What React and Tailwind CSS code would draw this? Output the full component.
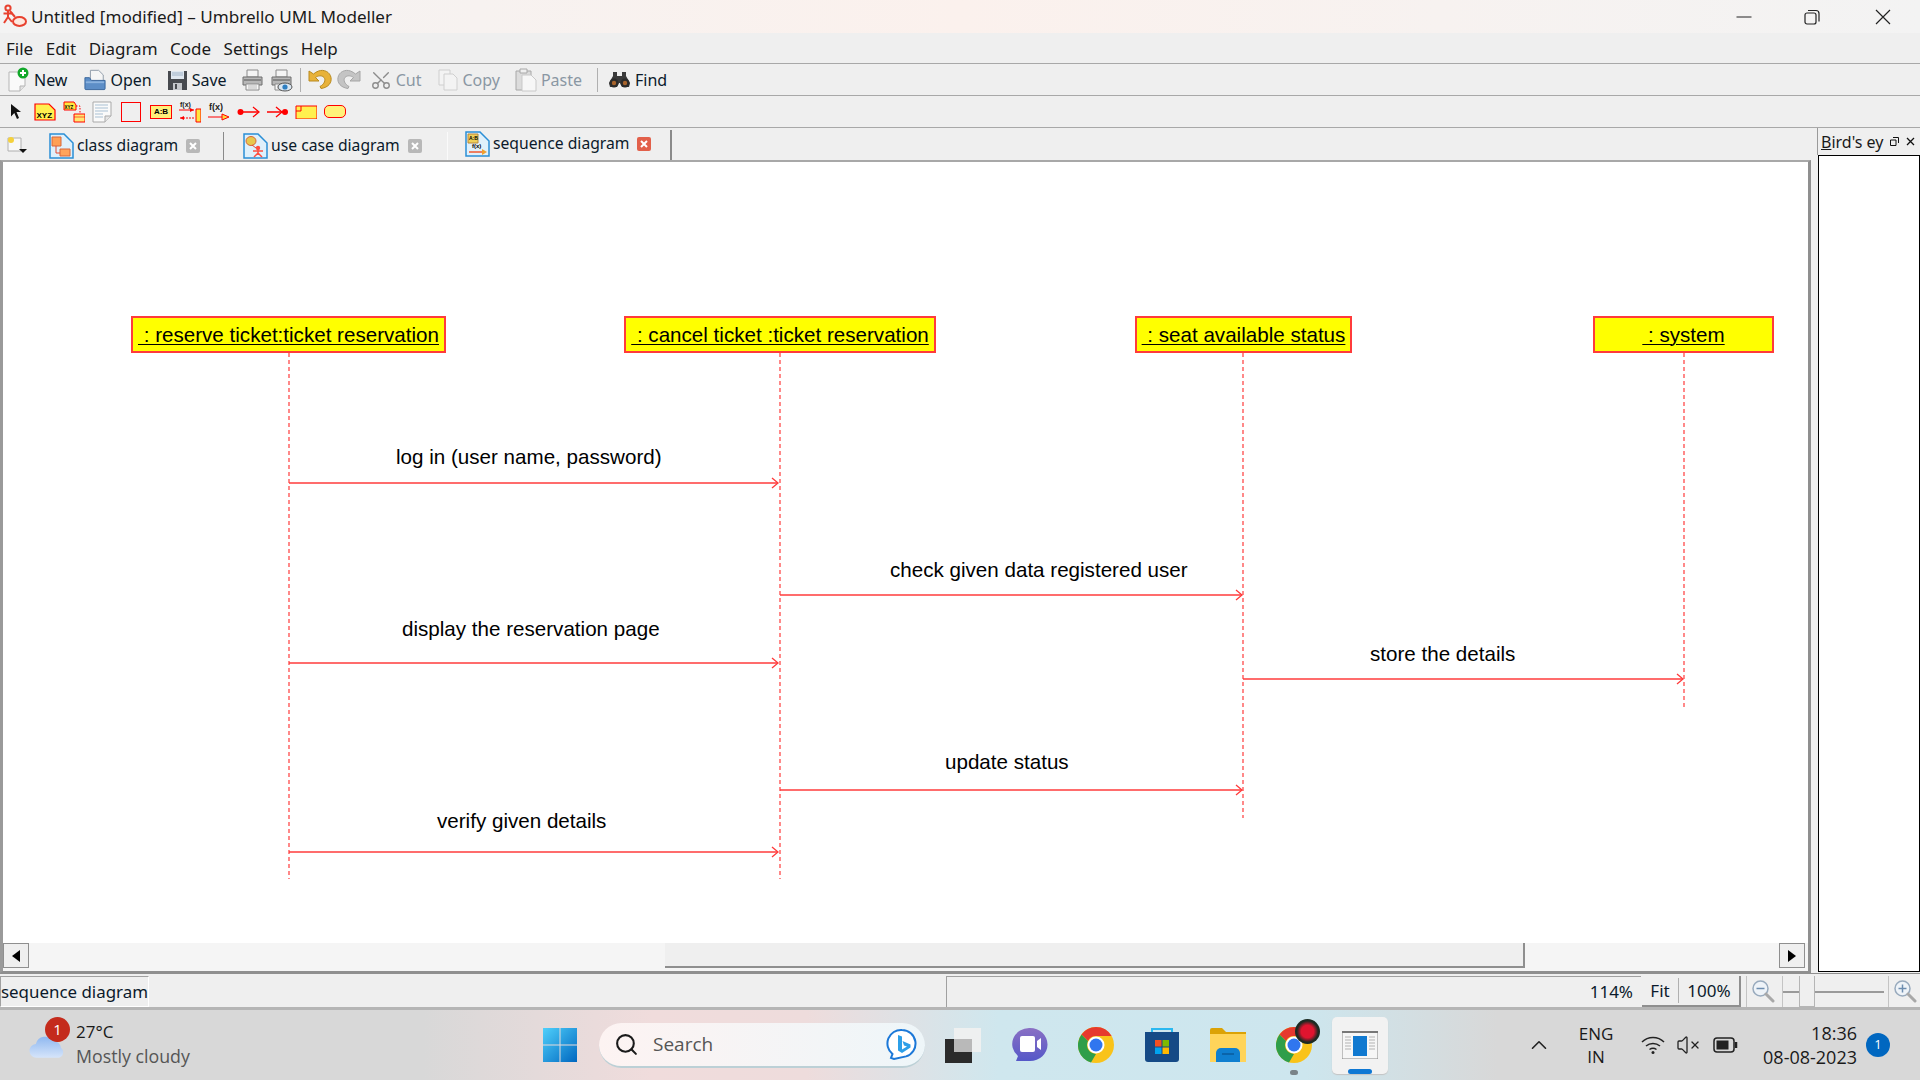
import React from "react";
import { Search, Scissors, ChevronUp, VolumeX } from "lucide-react";

const UI = "font-['Noto_Sans','Open_Sans',sans-serif]";

function AppLogo() {
  return (
    <svg width="26" height="26" viewBox="0 0 26 26" fill="none" stroke="#e8412f" strokeWidth="2">
      <circle cx="6" cy="4" r="2.600" />
      <path d="M6 7v6M1.500 9.500h9M6 13l-4 6M6 13l4 5" />
      <ellipse cx="17.500" cy="17.500" rx="6.500" ry="4.500" fill="#fde8df" />
      <path d="M8 7l5 6" />
    </svg>
  );
}

function NewIcon() {
  return (
    <svg width="24" height="26" viewBox="0 0 24 26">
      <path d="M3 5h11l5 5v9l-5 5H3z" fill="#fafafa" stroke="#b5b5b5" />
      <path d="M14 24v-5h5" fill="#e3e3e3" stroke="#b5b5b5" />
      <circle cx="17" cy="6" r="5.500" fill="#12a82a" />
      <path d="M17 3v6M14 6h6" stroke="#fff" strokeWidth="2" />
    </svg>
  );
}

function OpenIcon() {
  return (
    <svg width="22" height="25" viewBox="0 0 24 26">
      <path d="M7 3h9l5 5v7H7z" fill="#f5f5f5" stroke="#8b97a5" />
      <path d="M1 11h5l2 3h15v9a1 1 0 0 1-1 1H2a1 1 0 0 1-1-1z" fill="#5d8ec7" stroke="#34639a" />
      <path d="M2 15h20v2H2z" fill="#8cb3df" />
    </svg>
  );
}

function SaveIcon() {
  return (
    <svg width="21" height="22" viewBox="0 0 21 22">
      <path d="M1 2h19v19H1z" fill="#474a4f" />
      <path d="M4 2h13v8H4z" fill="#dfe7ef" />
      <path d="M5 4h11M5 6h11" stroke="#9fb2c6" />
      <path d="M6 14h9v7H6z" fill="#c4c7cb" />
      <path d="M8 15h2v5H8z" fill="#474a4f" />
    </svg>
  );
}

function PrintIcon({ eye }) {
  return (
    <svg width="23" height="24" viewBox="0 0 23 24">
      <path d="M6 2h11v7H6z" fill="#f4f4f4" stroke="#8a8a8a" />
      <path d="M2 9h19v8H2z" fill="#b7b7b7" stroke="#6e6e6e" />
      <path d="M3 12h17" stroke="#555" />
      <path d="M5 16h13v6H5z" fill="#f6f6f6" stroke="#8a8a8a" />
      <path d="M7 18h9M7 20h9" stroke="#bbb" />
      {eye && <ellipse cx="15" cy="19" rx="7" ry="4" fill="#dbe7f2" stroke="#555" />}
      {eye && <circle cx="15" cy="19" r="2.600" fill="#2f7fc1" />}
    </svg>
  );
}

function ArrowTurn({ flip, color, edge }) {
  return (
    <svg width="24" height="22" viewBox="0 0 24 22" className={flip ? "-scale-x-100" : ""}>
      <path
        d="M1 2v10h10l-3.500-3.500C10 6.500 14 6 16 8.500c2 2.500.5 6.500-4 9l1 2c7.500-1 11-6 10-11C22 3 16 0 10.500 2 8.500 2.800 6.800 3.800 5.500 5z"
        fill={color}
        stroke={edge}
      />
    </svg>
  );
}

function CopyIcon() {
  return (
    <svg width="20" height="22" viewBox="0 0 20 22" fill="#f3f3f3" stroke="#cfcfcf">
      <path d="M1 1h11v15H1z" />
      <path d="M6 5h9l4 4v12H6z" />
    </svg>
  );
}

function PasteIcon() {
  return (
    <svg width="22" height="24" viewBox="0 0 22 24">
      <path d="M1 3h15v19H1z" fill="#dcdcdc" stroke="#a8a8a8" />
      <path d="M5 1h7v4H5z" fill="#efefef" stroke="#a8a8a8" />
      <path d="M7 7h9l5 5v11H7z" fill="#f7f7f7" stroke="#c9c9c9" />
    </svg>
  );
}

function Binoculars() {
  return (
    <svg width="23" height="18" viewBox="0 0 23 18">
      <path d="M5 1h4v4h5V1h4v4l4 7-1 4h-7l-2-4h-1l-2 4H2l-1-4 4-7z" fill="#3a3a3a" />
      <circle cx="6" cy="12" r="4.500" fill="#2b2b2b" />
      <circle cx="17" cy="12" r="4.500" fill="#2b2b2b" />
      <circle cx="6" cy="12" r="2.200" fill="#a8642c" />
      <circle cx="17" cy="12" r="2.200" fill="#a8642c" />
    </svg>
  );
}

function ToolButton({ icon, label, disabled, className }) {
  return (
    <div className={"flex items-center " + className}>
      {icon}
      {label && (
        <span className={"ml-[4px] text-[16px] " + (disabled ? "text-[#8a97a3]" : "text-[#0b1a2b]")}>{label}</span>
      )}
    </div>
  );
}

function SelectArrow() {
  return (
    <svg width="14" height="18" viewBox="0 0 14 18" className="mr-[4px]">
      <path d="M2 1l10 8H7.500l2.500 6-2 1-2.700-6L2 13.500z" fill="#111" />
    </svg>
  );
}

function XyzIcon() {
  return (
    <svg width="22" height="18" viewBox="0 0 22 18">
      <path d="M1 1h14l6 6v10H1z" fill="#fff04f" stroke="#f00" strokeWidth="1.200" />
      <text x="2.500" y="15" fontSize="8" fontWeight="700" fontFamily="Liberation Sans">XYZ</text>
    </svg>
  );
}

function XyzDepIcon() {
  return (
    <svg width="22" height="22" viewBox="0 0 22 22">
      <path d="M1 1h10l2 3v5H1z" fill="#ffe53f" stroke="#f00" />
      <text x="1.500" y="8" fontSize="4.500" fontWeight="700" fontFamily="Liberation Sans">XYZ</text>
      <path d="M13 5h4v8" stroke="#f00" strokeDasharray="1.500 1.500" fill="none" />
      <path d="M11 13h11v8H11z" fill="#ffe873" stroke="#f00" />
      <path d="M11 16h11" stroke="#f00" strokeWidth=".6" />
    </svg>
  );
}

function NoteIcon() {
  return (
    <svg width="20" height="22" viewBox="0 0 20 22">
      <path d="M1 1h18v14l-6 6H1z" fill="#fafafa" stroke="#a9a9a9" />
      <path d="M13 21v-6h6" fill="#e5e5e5" stroke="#a9a9a9" />
      <path d="M3 4h13M3 7h13M3 10h13M3 13h8M3 16h8" stroke="#a9c0d3" />
    </svg>
  );
}

function FxMsgIcon() {
  return (
    <svg width="22" height="22" viewBox="0 0 22 22">
      <text x="1" y="6" fontSize="7" fontWeight="700" fontFamily="Liberation Sans" fill="#222">f(x)</text>
      <path d="M0 9h15" stroke="#f00" />
      <path d="M11 7l4 2-4 2z" fill="#f00" />
      <path d="M17 8h5v13h-5z" fill="#ffe53f" stroke="#f00" />
      <path d="M1 17h14" stroke="#f00" strokeDasharray="2 1" />
      <path d="M5 15l-4 2 4 2z" fill="#f00" />
    </svg>
  );
}

function FxIcon() {
  return (
    <svg width="22" height="20" viewBox="0 0 22 20">
      <text x="1" y="8" fontSize="9" fontWeight="700" fontFamily="Liberation Sans" fill="#222">f(x)</text>
      <path d="M0 15h16" stroke="#f00" />
      <path d="M14 12l7 3-7 3z" fill="#ffd83f" stroke="#f00" />
    </svg>
  );
}

function FoundIcon({ reverse }) {
  return (
    <svg width="23" height="12" viewBox="0 0 23 12">
      {reverse ? (
        <>
          <path d="M0 6h17" stroke="#f00" strokeWidth="1.500" />
          <path d="M9 1l6 5-6 5" stroke="#f00" strokeWidth="1.300" fill="none" />
          <circle cx="18" cy="6" r="3" fill="#f00" />
        </>
      ) : (
        <>
          <circle cx="3.500" cy="6" r="3" fill="#f00" />
          <path d="M5 6h16" stroke="#f00" strokeWidth="1.500" />
          <path d="M16 1l6 5-6 5" stroke="#f00" strokeWidth="1.300" fill="none" />
        </>
      )}
    </svg>
  );
}

function TabIcon({ kind }) {
  return (
    <svg width="25" height="26" viewBox="0 0 25 26">
      <path d="M1 1h14l5 5 4 4v15H1z" fill="#dff0fb" stroke="#2b8fd6" strokeWidth="1.500" />
      {kind === "class" && (
        <>
          <path d="M3 4h9v9H3z" fill="#ff9f54" stroke="#d8663a" />
          <path d="M11 16h10v7H11z" fill="#ffa45c" stroke="#d8663a" />
          <path d="M7 13v7h4" stroke="#e6492f" fill="none" />
        </>
      )}
      {kind === "case" && (
        <>
          <ellipse cx="8" cy="8" rx="5" ry="4.500" fill="#e8c84d" stroke="#d8663a" />
          <circle cx="15" cy="15" r="2.200" fill="#ff4e3f" />
          <path d="M15 17v3M10 18h10M15 20l-4 4M15 20l4 4" stroke="#ff4e3f" strokeWidth="1.500" />
          <path d="M9 12l4 3" stroke="#e6492f" />
        </>
      )}
      {kind === "seq" && (
        <>
          <path d="M3 3h10v9H3z" fill="#f0d15a" stroke="#b8863a" />
          <text x="4" y="9" fontSize="5" fontWeight="700" fontFamily="Liberation Sans">A:B</text>
          <text x="7" y="17" fontSize="6" fontWeight="700" fontFamily="Liberation Sans">f(x)</text>
          <path d="M4 21h15" stroke="#f0592f" strokeWidth="1.500" />
          <path d="M17 18l5 3-5 3z" fill="#f0a12f" />
        </>
      )}
    </svg>
  );
}

function TabClose({ active }) {
  return (
    <span className={"ml-[8px] flex h-[14px] w-[14px] items-center justify-center rounded-[2px] " + (active ? "bg-[#e2604a]" : "bg-[#b8b8b8]")}>
      <svg width="8" height="8" viewBox="0 0 8 8" stroke="#fff" strokeWidth="2">
        <path d="M1 1l6 6M7 1L1 7" />
      </svg>
    </span>
  );
}

function ZoomGlass({ plus }) {
  return (
    <svg width="24" height="25" viewBox="0 0 24 25" fill="none">
      <circle cx="9.500" cy="9.500" r="7.500" fill="#eef3f8" stroke="#98aabd" strokeWidth="1.500" />
      <path d="M5.500 9.500h8" stroke="#6d8db0" strokeWidth="1.500" />
      {plus && <path d="M9.500 5.500v8" stroke="#6d8db0" strokeWidth="1.500" />}
      <path d="M15 15l7 7" stroke="#a8a8a8" strokeWidth="3" strokeLinecap="round" />
    </svg>
  );
}

function WeatherIcon() {
  return (
    <div className="relative h-[44px] w-[44px]">
      <svg width="37" height="32" viewBox="0 0 38 32" className="absolute bottom-[7px] left-0">
        <defs>
          <linearGradient id="cl" x1="0" y1="0" x2="0" y2="1">
            <stop offset="0" stopColor="#8fb8f0" />
            <stop offset="1" stopColor="#d5e4fa" />
          </linearGradient>
        </defs>
        <circle cx="29" cy="7" r="7" fill="#f08a1d" />
        <path d="M8 30a7 7 0 0 1-1-14 10 10 0 0 1 18-3 8 8 0 0 1 8 7c4 3 2 10-3 10z" fill="url(#cl)" />
      </svg>
      <span className="absolute left-[16px] top-[-6px] flex h-[25px] w-[25px] items-center justify-center rounded-full bg-[#c42b1c] text-[15px] text-white">1</span>
    </div>
  );
}

function WinLogo() {
  return (
    <svg width="36" height="36" viewBox="0 0 36 36">
      <defs>
        <linearGradient id="wl" x1="0" y1="0" x2="1" y2="1">
          <stop offset="0" stopColor="#4fd0fb" />
          <stop offset="1" stopColor="#0067c0" />
        </linearGradient>
      </defs>
      <path d="M1 1h16.500v16.500H1zM18.500 1H35v16.500H18.500zM1 18.500h16.500V35H1zM18.500 18.500H35V35H18.500z" fill="url(#wl)" />
    </svg>
  );
}

function BingIcon() {
  return (
    <svg width="32" height="32" viewBox="0 0 32 32" fill="none">
      <path d="M16 2a13.500 13.500 0 0 1 4 26.400L8 31l-3-1 1.500-4A13.500 13.500 0 0 1 16 2z" fill="#fff" stroke="#1b78d8" strokeWidth="2" />
      <path d="M12 7l4 1.500v13l5-3-3-1-1.500-4.500 8 3.500v3L16 25l-4-2.500z" fill="#2c9fe8" />
    </svg>
  );
}

function TerminalIcon() {
  return (
    <svg width="36" height="36" viewBox="0 0 36 36">
      <path d="M0 12h27v24H0z" fill="#2b2b2b" />
      <path d="M9 1h27v24H9z" fill="#f1f1f1" opacity=".9" />
      <path d="M9 12h18v13H9z" fill="#b9b9b9" />
    </svg>
  );
}

function TeamsIcon() {
  return (
    <svg width="36" height="36" viewBox="0 0 36 36">
      <defs>
        <linearGradient id="tm" x1="0" y1="0" x2="0" y2="1">
          <stop offset="0" stopColor="#8a70c4" />
          <stop offset="1" stopColor="#5558c8" />
        </linearGradient>
      </defs>
      <path d="M18 1a17 16 0 0 1 0 33H4l2-5A17 16 0 0 1 18 1z" fill="url(#tm)" />
      <path d="M8 11a2 2 0 0 1 2-2h11a2 2 0 0 1 2 2v12a2 2 0 0 1-2 2H10a2 2 0 0 1-2-2z" fill="#fff" />
      <path d="M25 14l4-3v12l-4-3z" fill="#fff" />
    </svg>
  );
}

function ChromeIcon() {
  return (
    <svg width="36" height="36" viewBox="0 0 36 36">
      <circle cx="18" cy="18" r="18" fill="#f9c31a" />
      <path d="M18 0a18 18 0 0 1 15.600 9H18a9 9 0 0 0-8 5L3.500 7.500A18 18 0 0 1 18 0z" fill="#e6392e" />
      <path d="M3.500 7.500L10 14a9 9 0 0 0 8 13l-5 8.500A18 18 0 0 1 3.500 7.500z" fill="#2f9e4a" />
      <circle cx="18" cy="18" r="8.500" fill="#fff" />
      <circle cx="18" cy="18" r="6.500" fill="#3076ef" />
    </svg>
  );
}

function StoreIcon() {
  return (
    <svg width="36" height="36" viewBox="0 0 36 36">
      <path d="M8 6V2h20v4" fill="none" stroke="#2ab8f0" strokeWidth="2" />
      <path d="M1 5h34v27a3 3 0 0 1-3 3H4a3 3 0 0 1-3-3z" fill="#154a86" />
      <path d="M11 13h6.500v6.500H11z" fill="#f25022" />
      <path d="M18.500 13H25v6.500h-6.500z" fill="#7fba00" />
      <path d="M11 20.500h6.500V27H11z" fill="#00a4ef" />
      <path d="M18.500 20.500H25V27h-6.500z" fill="#ffb900" />
    </svg>
  );
}

function FolderIcon() {
  return (
    <svg width="36" height="34" viewBox="0 0 36 34">
      <path d="M0 2a2 2 0 0 1 2-2h10l4 4h20v30H0z" fill="#dba206" />
      <path d="M0 6h36v28H0z" fill="#ffd45a" />
      <path d="M6 34v-9a5 5 0 0 1 5-5h14a5 5 0 0 1 5 5v9z" fill="#0f7fd0" />
      <path d="M12 26h12" stroke="#0a5b9e" strokeWidth="1.500" />
    </svg>
  );
}

function UmbrelloTaskIcon() {
  return (
    <svg width="36" height="28" viewBox="0 0 36 28">
      <path d="M0 0h36v28H0z" fill="#f6f6f6" stroke="#888" />
      <path d="M0 0h36v2H0z" fill="#777" />
      <path d="M11 5h14v20H11z" fill="#1079d0" />
      <path d="M3 6h6M3 9h6M3 12h6M3 15h6M3 18h6M27 6h6M27 9h6M27 12h6M27 15h6M27 18h6" stroke="#c9c9c9" strokeWidth="1.500" />
    </svg>
  );
}

function Node({ label, className }) {
  return (
    <div className={"absolute top-[154px] flex h-[37px] items-center justify-center whitespace-pre border-2 border-[#ff3b3b] bg-[#ffff00] pt-[1px] text-[20.6px] text-black underline decoration-1 underline-offset-2 " + className}>
      {label}
    </div>
  );
}

function Msg({ children, className }) {
  return <span className={"absolute whitespace-pre text-[20.6px] leading-[24px] text-black " + className}>{children}</span>;
}

function Arrow({ x1, x2, y }) {
  return (
    <g stroke="#ff3b3b" strokeWidth="1.300" fill="none">
      <path d={`M${x1} ${y}H${x2}`} />
      <path d={`M${x2 - 6} ${y - 5}l6 5-6 5`} />
    </g>
  );
}

function Lifeline({ x, y2 }) {
  return <path d={`M${x} 353V${y2}`} stroke="#ff3b3b" strokeWidth="1.200" strokeDasharray="4 3" fill="none" />;
}

export default function App() {
  return (
    <div className={"flex h-[1080px] w-[1920px] flex-col overflow-hidden bg-[#efefef] " + UI}>
      {/* title bar */}
      <div className="flex h-[33px] items-center bg-gradient-to-r from-[#f3f3f3] via-[#fbf1ed] to-[#f3f3f3] pl-[2px]">
        <AppLogo />
        <span className="ml-[3px] text-[17.100px] text-[#1a1a1a]">Untitled [modified] – Umbrello UML Modeller</span>
        <div className="ml-auto flex items-center">
          <svg width="16" height="16" viewBox="0 0 16 16" stroke="#222" className="mr-[52px]">
            <path d="M0.500 8h15" />
          </svg>
          <svg width="16" height="16" viewBox="0 0 16 16" stroke="#222" fill="none" strokeWidth="1.200" className="mr-[55px]">
            <rect x="1" y="4" width="11" height="11" rx="2" />
            <path d="M4 1.500h8a3 3 0 0 1 3 3v8" />
          </svg>
          <svg width="16" height="16" viewBox="0 0 16 16" stroke="#222" strokeWidth="1.200" className="mr-[29px]">
            <path d="M1 1l14 14M15 1L1 15" />
          </svg>
        </div>
      </div>

      {/* menu */}
      <div className="flex h-[31px] items-center gap-[12.500px] border-b border-[#a8a8a8] pl-[6px] pt-[2px] text-[17px] text-[#1a1a1a]">
        <span>File</span>
        <span>Edit</span>
        <span>Diagram</span>
        <span>Code</span>
        <span>Settings</span>
        <span>Help</span>
      </div>

      {/* main toolbar */}
      <div className="flex h-[32px] items-center border-b border-[#a8a8a8] pl-[6px]">
        <ToolButton icon={<NewIcon />} label="New" />
        <ToolButton icon={<OpenIcon />} label="Open" className="ml-[17px]" />
        <ToolButton icon={<SaveIcon />} label="Save" className="ml-[15px]" />
        <ToolButton icon={<PrintIcon />} className="ml-[14px]" />
        <ToolButton icon={<PrintIcon eye />} className="ml-[6px]" />
        <div className="ml-[7px] h-[24px] w-px bg-[#b0b0b0]" />
        <ToolButton icon={<ArrowTurn color="#e8b23a" edge="#b98a1e" />} className="ml-[7px]" />
        <ToolButton icon={<ArrowTurn flip color="#c4c4c4" edge="#a6a6a6" />} className="ml-[5px]" />
        <ToolButton icon={<Scissors size={22} color="#8c8c8c" strokeWidth={1.500} className="-rotate-90" />} label="Cut" disabled className="ml-[9px]" />
        <ToolButton icon={<CopyIcon />} label="Copy" disabled className="ml-[17px]" />
        <ToolButton icon={<PasteIcon />} label="Paste" disabled className="ml-[15px]" />
        <div className="ml-[15px] h-[24px] w-px bg-[#b0b0b0]" />
        <ToolButton icon={<Binoculars />} label="Find" className="ml-[10px]" />
      </div>

      {/* widget toolbar */}
      <div className="flex h-[32px] items-center gap-[7px] border-b border-[#a8a8a8] pl-[9px]">
        <SelectArrow />
        <XyzIcon />
        <XyzDepIcon />
        <NoteIcon />
        <div className="ml-[2px] h-[20px] w-[20px] border border-[#ff0000]" />
        <div className="ml-[2px] flex h-[14px] w-[22px] items-center justify-center border border-[#ff0000] bg-[#ffef7a] text-[8px] font-bold leading-none font-['Liberation_Sans',sans-serif]">A:B</div>
        <FxMsgIcon />
        <FxIcon />
        <FoundIcon />
        <FoundIcon reverse />
        <svg width="22" height="14" viewBox="0 0 22 14" className="ml-[-2px]">
          <path d="M1 1h21v13H1z" fill="#fff04f" stroke="#f00" />
          <path d="M1 6h5V1" fill="none" stroke="#f00" />
        </svg>
        <div className="h-[13px] w-[22px] rounded-[5px] border border-[#ff0000] bg-[#fff27a]" />
      </div>

      {/* workspace + dock */}
      <div className="flex h-[845px]">
        <div className="flex w-[1811px] flex-col">
          <div className="flex h-[32px] items-end text-[15.700px] text-[#0b1a2b]">
            <div className="flex h-[30px] w-[34px] items-center pl-[6px]">
              <svg width="22" height="20" viewBox="0 0 22 20">
                <path d="M2 3h13v13H2z" fill="#f8f8f8" stroke="#b0b0b0" />
                <circle cx="5" cy="5" r="3" fill="#f5d13c" />
                <path d="M13 14h8l-4 4z" fill="#111" />
              </svg>
            </div>
            <div className="flex h-[28px] w-[190px] items-center border-r border-[#8a8a8a] pb-[1px] pl-[15px]">
              <TabIcon kind="class" />
              <span className="ml-[3px]">class diagram</span>
              <TabClose />
            </div>
            <div className="flex h-[28px] w-[224px] items-center border-r border-[#fafafa] pb-[1px] pl-[19px]">
              <TabIcon kind="case" />
              <span className="ml-[3px]">use case diagram</span>
              <TabClose />
            </div>
            <div className="flex h-[30px] w-[224px] items-center border-r-2 border-[#8a8a8a] pb-[2px] pl-[17px]">
              <TabIcon kind="seq" />
              <span className="ml-[3px]">sequence diagram</span>
              <TabClose active />
            </div>
          </div>

          <div className="flex flex-1 flex-col border-x-[3px] border-b-2 border-t-2 border-[#8f8f8f] border-l-[#9a9a9a] border-t-[#a8a8a8] bg-white">
            {/* diagram canvas */}
            <div className="relative flex-1 overflow-hidden font-['Liberation_Sans',sans-serif]">
              <svg className="absolute left-0 top-0" width="1805" height="781" viewBox="3 162 1805 781">
                <Lifeline x={289} y2={879} />
                <Lifeline x={780} y2={879} />
                <Lifeline x={1243} y2={818} />
                <Lifeline x={1684} y2={707} />
                <Arrow x1={289} x2={778} y={483} />
                <Arrow x1={780} x2={1242} y={595} />
                <Arrow x1={289} x2={778} y={663} />
                <Arrow x1={1243} x2={1683} y={679} />
                <Arrow x1={780} x2={1242} y={790} />
                <Arrow x1={289} x2={778} y={852} />
              </svg>
              <Node label=" : reserve ticket:ticket reservation" className="left-[128px] w-[315px]" />
              <Node label=" : cancel ticket :ticket reservation" className="left-[621px] w-[312px]" />
              <Node label=" : seat available status" className="left-[1132px] w-[217px]" />
              <Node label=" : system" className="left-[1590px] w-[181px]" />
              <Msg className="left-[393px] top-[283px]">log in (user name, password)</Msg>
              <Msg className="left-[887px] top-[396px]">check given data registered user</Msg>
              <Msg className="left-[399px] top-[455px]">display the reservation page</Msg>
              <Msg className="left-[1367px] top-[480px]">store the details</Msg>
              <Msg className="left-[942px] top-[588px]">update status</Msg>
              <Msg className="left-[434px] top-[647px]">verify given details</Msg>
            </div>
            {/* horizontal scrollbar */}
            <div className="flex h-[28px] items-start bg-[#f5f5f5] pr-[3px]">
              <div className="flex h-[25px] w-[26px] items-center justify-center border border-[#8f8f8f] bg-[#efefef]">
                <svg width="8" height="12" viewBox="0 0 8 12"><path d="M8 0v12L0 6z" fill="#000" /></svg>
              </div>
              <div className="ml-[636px] h-[25px] w-[860px] border-b-2 border-r-2 border-[#8f8f8f] bg-[#efefef]" />
              <div className="ml-auto flex h-[25px] w-[26px] items-center justify-center border border-[#8f8f8f] bg-[#efefef]">
                <svg width="8" height="12" viewBox="0 0 8 12"><path d="M0 0v12l8-6z" fill="#000" /></svg>
              </div>
            </div>
          </div>
        </div>

        {/* bird's eye dock */}
        <div className="ml-[6px] flex flex-1 flex-col">
          <div className="flex h-[27px] items-center border-l border-[#9a9a9a] pl-[3px] text-[16px] text-[#1a1a1a]">
            <span className="w-[63px] whitespace-pre"><span className="underline">B</span>ird's ey</span>
            <svg width="9" height="9" viewBox="0 0 9 9" fill="none" stroke="#111" className="ml-[6px]">
              <path d="M0.500 3h5.500v5.500H0.500zM3 0.500h5.500V6" />
            </svg>
            <svg width="9" height="9" viewBox="0 0 9 9" stroke="#111" strokeWidth="1.300" className="ml-[7px]">
              <path d="M1 1l7 7M8 1L1 8" />
            </svg>
          </div>
          <div className="ml-[1px] h-[817px] border border-black bg-white" />
        </div>
      </div>

      {/* status bar */}
      <div className="flex h-[37px] items-stretch border-t border-[#8f8f8f] border-b-[3px] border-b-[#b5b5b5] pt-[2px] text-[17px] text-[#0b1a2b]">
        <div className="flex w-[149px] items-center whitespace-nowrap border border-t-[#a0a0a0] border-l-[#a0a0a0] border-r-white border-b-white pt-[1px] text-[16.900px]">sequence diagram</div>
        <div className="ml-[797px] flex w-[695px] items-center justify-end border-l border-t border-[#a0a0a0] pr-[8px]">
          <span>114%</span>
        </div>
        <div className="ml-[1px] flex w-[99px] items-center border-b-2 border-r-2 border-[#8f8f8f]">
          <span className="w-[37px] border-r border-[#b0b0b0] text-center">Fit</span>
          <span className="flex-1 text-center">100%</span>
        </div>
        <div className="ml-[5px] flex w-[33px] items-center justify-center border-l border-[#c4c4c4]">
          <ZoomGlass />
        </div>
        <div className="relative ml-[3px] flex w-[102px] items-center border-l border-[#c4c4c4]">
          <div className="h-[2px] w-full bg-[#9a9a9a]" />
          <div className="absolute left-[16px] top-0 h-full w-[16px] border-x border-b border-[#b5b5b5] bg-[#efefef]" />
        </div>
        <div className="ml-[4px] flex flex-1 items-center justify-center border-l border-[#c4c4c4]">
          <ZoomGlass plus />
        </div>
      </div>

      {/* windows taskbar */}
      <div className="flex h-[70px] items-center bg-[linear-gradient(90deg,#d8d8d8_0%,#d8d8d8_22%,#f0dcdc_34%,#eedcdc_42%,#cfe7ee_52%,#cde6ee_68%,#d8d8d8_78%,#d8d8d8_100%)] font-['Open_Sans',sans-serif]">
        <div className="ml-[29px] flex w-[47px] items-end">
          <WeatherIcon />
        </div>
        <div className="flex w-[119px] flex-col leading-[24px]">
          <span className="mt-[-2px] text-[17px] text-[#1a1a1a]">27°C</span>
          <span className="whitespace-nowrap text-[17.800px] text-[#555]">Mostly cloudy</span>
        </div>
        <div className="ml-[347px]">
          <WinLogo />
        </div>
        <div className="ml-[21px] flex h-[45px] w-[326px] items-center rounded-full border-b-2 border-[#bcd0d6] bg-gradient-to-r from-[#fdf3f2] to-[#eef6f9] pl-[15px] pr-[7px]">
          <Search size={25} color="#1a1a1a" strokeWidth={2} />
          <span className="ml-[14px] text-[19px] text-[#555]">Search</span>
          <div className="ml-auto">
            <BingIcon />
          </div>
        </div>
        <div className="ml-[20px]">
          <TerminalIcon />
        </div>
        <div className="ml-[31px]">
          <TeamsIcon />
        </div>
        <div className="ml-[30px]">
          <ChromeIcon />
        </div>
        <div className="ml-[30px]">
          <StoreIcon />
        </div>
        <div className="ml-[30px]">
          <FolderIcon />
        </div>
        <div className="relative ml-[30px]">
          <ChromeIcon />
          <span className="absolute left-[19px] top-[-8px] h-[25px] w-[25px] rounded-full bg-[radial-gradient(closest-side,#e0142f_50%,#1c2a22_85%)]" />
          <span className="absolute left-[14px] top-[43px] h-[5px] w-[8px] rounded-full bg-[#7a8388]" />
        </div>
        <div className="relative ml-[20px] flex h-[57px] w-[56px] items-center justify-center rounded-[5px] bg-[#f2f2f2] shadow-[0_1px_1px_#c4c4c4]">
          <UmbrelloTaskIcon />
          <span className="absolute bottom-0 left-[16px] h-[5px] w-[24px] rounded-full bg-[#0f78d4]" />
        </div>
        <ChevronUp size={26} color="#222" strokeWidth={1.500} className="ml-[138px]" />
        <div className="ml-[24px] flex w-[40px] flex-col items-center text-[17px] leading-[23px] text-[#1a1a1a]">
          <span>ENG</span>
          <span>IN</span>
        </div>
        <svg width="24" height="20" viewBox="0 0 24 20" fill="none" stroke="#222" strokeWidth="1.500" className="ml-[25px]">
          <path d="M1 7c6-6 16-6 22 0M5 11c4-3.500 10-3.500 14 0M8.500 14.500c2-1.500 5-1.500 7 0" />
          <circle cx="12" cy="17.500" r="1.500" fill="#222" stroke="none" />
        </svg>
        <VolumeX size={24} color="#222" strokeWidth={1.300} className="ml-[11px]" />
        <svg width="25" height="16" viewBox="0 0 25 16" fill="none" stroke="#222" strokeWidth="1.500" className="ml-[13px]">
          <rect x="1" y="1" width="20" height="14" rx="3" />
          <rect x="3.500" y="3.500" width="12" height="9" fill="#222" stroke="none" />
          <path d="M23 5v6" strokeWidth="2.500" />
        </svg>
        <div className="ml-[25px] flex w-[94px] flex-col items-end text-[18px] leading-[24px] text-[#1a1a1a]">
          <span>18:36</span>
          <span>08-08-2023</span>
        </div>
        <span className="ml-[9px] flex h-[24px] w-[24px] items-center justify-center rounded-full bg-[#0067c0] text-[13px] text-white">1</span>
      </div>
    </div>
  );
}
